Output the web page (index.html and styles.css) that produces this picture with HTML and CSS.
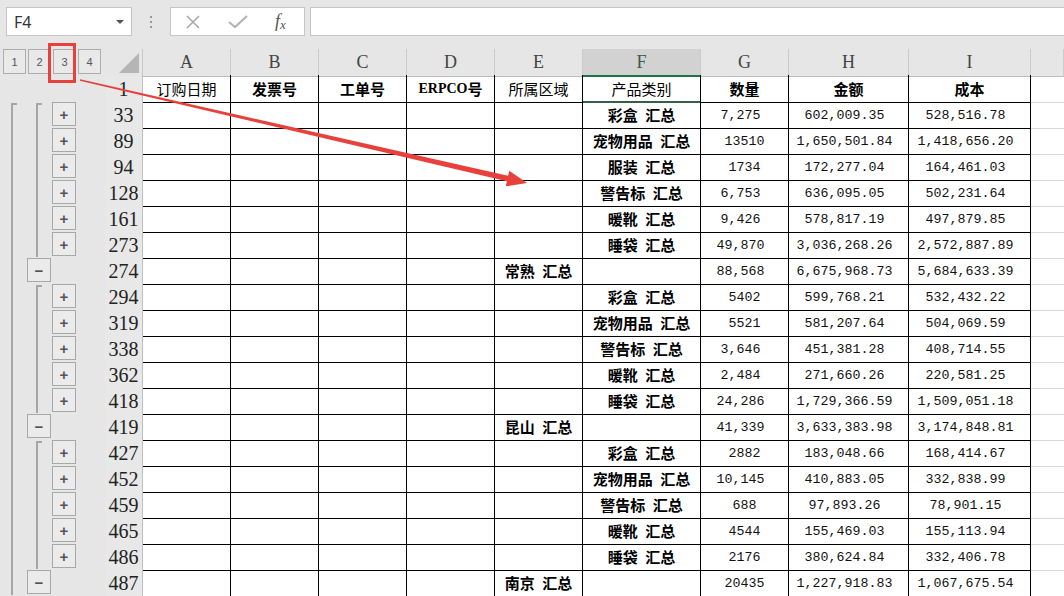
FILE: index.html
```html
<!doctype html>
<html>
<head>
  <meta charset="utf-8">
  <link rel="stylesheet" href="styles.css">
</head>
<body>

  <div class="toolbar">
    <div class="namebox">F4<span class="caret"></span></div>
    <div class="grip"><i></i><i></i><i></i></div>
    <div class="fxbox">
      <svg class="cancel" width="16" height="16" viewBox="0 0 16 16"><path d="M2 2 L14 14 M14 2 L2 14" stroke="#a9a9a9" stroke-width="1.6" fill="none"/></svg>
      <svg class="enter" width="20" height="14" viewBox="0 0 20 14"><path d="M1 7 L7 12 L19 1" stroke="#b4b4b4" stroke-width="2.2" fill="none"/></svg>
      <span class="fx">f<sub>x</sub></span>
    </div>
    <div class="formula"></div>
  </div>

  <div id="sheet" class="sheet"></div>

  <div class="mark"></div>
  <svg class="arrow" width="1064" height="596">
    <polygon points="80.2,79.2 508.1,175.8 509.3,170.7 527,183 505.7,186.3 506.9,181.2 79.8,80.8" fill="#e8413c"/>
  </svg>

  <script>
    var heads = ['A', 'B', 'C', 'D', 'E', 'F', 'G', 'H', 'I', ''];

    var titles = [
      ['订购日期', ''], ['发票号', 'b'], ['工单号', 'b'], ['<span class="lat">ERPCO</span>号', 'b'],
      ['所属区域', ''], ['产品类别', ' sel1'], ['数量', 'b'], ['金额', 'b'], ['成本', 'b']
    ];

    var rows = [
      ['33', '', '彩盒 汇总', '7,275', '602,009.35', '528,516.78'],
      ['89', '', '宠物用品 汇总', '13510', '1,650,501.84', '1,418,656.20'],
      ['94', '', '服装 汇总', '1734', '172,277.04', '164,461.03'],
      ['128', '', '警告标 汇总', '6,753', '636,095.05', '502,231.64'],
      ['161', '', '暖靴 汇总', '9,426', '578,817.19', '497,879.85'],
      ['273', '', '睡袋 汇总', '49,870', '3,036,268.26', '2,572,887.89'],
      ['274', '常熟 汇总', '', '88,568', '6,675,968.73', '5,684,633.39'],
      ['294', '', '彩盒 汇总', '5402', '599,768.21', '532,432.22'],
      ['319', '', '宠物用品 汇总', '5521', '581,207.64', '504,069.59'],
      ['338', '', '警告标 汇总', '3,646', '451,381.28', '408,714.55'],
      ['362', '', '暖靴 汇总', '2,484', '271,660.26', '220,581.25'],
      ['418', '', '睡袋 汇总', '24,286', '1,729,366.59', '1,509,051.18'],
      ['419', '昆山 汇总', '', '41,339', '3,633,383.98', '3,174,848.81'],
      ['427', '', '彩盒 汇总', '2882', '183,048.66', '168,414.67'],
      ['452', '', '宠物用品 汇总', '10,145', '410,883.05', '332,838.99'],
      ['459', '', '警告标 汇总', '688', '97,893.26', '78,901.15'],
      ['465', '', '暖靴 汇总', '4544', '155,469.03', '155,113.94'],
      ['486', '', '睡袋 汇总', '2176', '380,624.84', '332,406.78'],
      ['487', '南京 汇总', '', '20435', '1,227,918.83', '1,067,675.54']
    ];

    var num = function(v){
      var cls = v.indexOf(',') >= 0 ? 'c n pad' : 'c n';
      return "<div class='" + cls + "'>" + v + "</div>";
    }

    // column letters
    var markup = "<div class='row head'><div class='levels'>";
    for(var i = 1; i <= 4; i++){
      markup += "<span>" + i + "</span>";
    }
    markup += "</div><div class='corner'><i></i></div>";
    for(var i = 0; i < heads.length; i++){
      markup += "<div class='ch" + (heads[i] == 'F' ? " sel" : "") + "'>" + heads[i] + "</div>";
    }
    markup += "</div>";

    // row 1 titles
    markup += "<div class='row'><div class='gut'></div><div class='rh'>1</div>";
    for(var i = 0; i < titles.length; i++){
      markup += "<div class='c h " + titles[i][1] + "'>" + titles[i][0] + "</div>";
    }
    markup += "<div class='c j'></div></div>";

    // data rows
    var prevTotal = true;
    for(var i = 0; i < rows.length; i++){
      var r = rows[i];
      var isTotal = r[1] != '';
      var gut = "<div class='gut'><span class='s1'><i class='ln" + (i == 0 ? " top" : "") + "'></i></span><span class='s2'>";
      if(isTotal){
        gut += "<b class='btn'>&minus;</b></span>";
      }
      else{
        gut += "<i class='ln" + (prevTotal ? " top" : "") + "'></i></span><span class='s3'><b class='btn'>+</b></span>";
      }
      gut += "</div>";
      prevTotal = isTotal;

      markup += "<div class='row'>" + gut + "<div class='rh'>" + r[0] + "</div>";
      markup += "<div class='c'></div><div class='c'></div><div class='c'></div><div class='c'></div>";
      markup += "<div class='c t'>" + r[1] + "</div>";
      markup += "<div class='c t'>" + r[2] + "</div>";
      markup += num(r[3]) + num(r[4]) + num(r[5]);
      markup += "<div class='c j'></div></div>";
    }
    document.getElementById("sheet").innerHTML = markup;
  </script>

</body>
</html>
```

FILE: styles.css
```css
*{
  box-sizing: border-box;
}
body{
  margin: 0;
  width: 1064px;
  height: 596px;
  overflow: hidden;
  position: relative;
  background: #ffffff;
  font-family: "Noto Sans CJK SC", sans-serif;
}

/* formula bar */
.toolbar{
  height: 49px;
  background: #e6e6e6;
  display: flex;
  align-items: flex-start;
  padding: 7px 0 0 6px;
}
.namebox{
  width: 126px;
  height: 29px;
  background: #fff;
  border: 1px solid #c6c6c6;
  display: flex;
  align-items: center;
  padding-left: 7px;
  font: 16px "Noto Sans", sans-serif;
  color: #333;
}
.caret{
  margin-left: auto;
  margin-right: 7px;
  width: 0;
  height: 0;
  border-left: 4px solid transparent;
  border-right: 4px solid transparent;
  border-top: 4px solid #555;
}
.grip{
  width: 38px;
  height: 29px;
  display: flex;
  flex-direction: column;
  align-items: center;
  justify-content: center;
  gap: 3px;
}
.grip i{
  width: 2px;
  height: 2px;
  background: #999;
}
.fxbox{
  width: 135px;
  height: 29px;
  background: #fff;
  border: 1px solid #c6c6c6;
  display: flex;
  align-items: center;
}
.cancel{
  margin-left: 14px;
}
.enter{
  margin-left: 27px;
}
.fx{
  margin-left: 27px;
  font: italic 18px "Liberation Serif", serif;
  color: #555;
}
.fx sub{
  font-size: 13px;
  vertical-align: -2px;
}
.formula{
  flex: 1;
  margin-left: 5px;
  height: 29px;
  background: #fff;
  border: 1px solid #c6c6c6;
  border-right: none;
}

/* grid */
.row{
  display: grid;
  grid-template-columns: 105px 38px 88px 88px 88px 88px 88px 118px 88px 120px 122px 33px;
  height: 26px;
}
.head .levels{
  background: #e6e6e6;
  display: flex;
  padding-left: 3px;
}
.levels span{
  width: 23px;
  height: 25px;
  margin-right: 2px;
  border: 1px solid #adadad;
  background: #e9e9e9;
  font: 11px "Liberation Sans", sans-serif;
  color: #555;
  display: flex;
  align-items: center;
  justify-content: center;
}
.corner{
  background: #e6e6e6;
  border-right: 1px solid #c8c8c8;
  border-bottom: 1px solid #bdbdbd;
  display: flex;
  justify-content: flex-end;
  align-items: flex-end;
  padding: 0 3px 3px 0;
}
.corner i{
  width: 0;
  height: 0;
  border-left: 20px solid transparent;
  border-bottom: 20px solid #b5b5b5;
}
.ch{
  background: #e6e6e6;
  border-right: 1px solid #cbcbcb;
  border-bottom: 1px solid #bdbdbd;
  text-align: center;
  font: 18px "Liberation Serif", serif;
  line-height: 26px;
  color: #444;
}
.ch.sel{
  background: #d2d2d2;
  border-bottom: 2px solid #217346;
  color: #3d5a4a;
}

/* outline gutter */
.gut{
  background: #e6e6e6;
  display: flex;
}
.s1, .s2{
  width: 26px;
  height: 26px;
}
.ln{
  display: block;
  width: 6px;
  height: 26px;
  border-left: 2px solid #a6a6a6;
}
.s1 .ln{
  margin-left: 11px;
}
.s2 .ln{
  margin-left: 10px;
}
.ln.top{
  margin-top: 2px;
  height: 24px;
  border-top: 2px solid #a6a6a6;
}
.btn{
  display: flex;
  align-items: center;
  justify-content: center;
  width: 24px;
  height: 24px;
  margin-top: 1px;
  border: 1px solid #a8a8a8;
  background: #ebebeb;
  font: bold 15px "Liberation Sans", sans-serif;
  color: #555;
}
.s2 .btn{
  margin-left: 1px;
}

/* row headers and cells */
.rh{
  background: #e8e8e8;
  border-right: 1px solid #c0c0c0;
  border-bottom: 1px solid #d6d6d6;
  text-align: center;
  font: 20px "Liberation Serif", serif;
  line-height: 26px;
  padding-top: 1px;
  color: #222;
}
.c{
  border-right: 1px solid #000;
  border-bottom: 1px solid #000;
  display: flex;
  align-items: center;
  justify-content: center;
  white-space: pre;
  color: #000;
}
.h{
  font: 15px "Noto Sans CJK SC", sans-serif;
}
.h.b{
  font-weight: bold;
}
.lat{
  font: bold 14px "Liberation Serif", serif;
}
.sel1{
  border-bottom: 2px solid #3a5d4a;
}
.t{
  font: bold 15px "Noto Sans CJK SC", sans-serif;
  word-spacing: 4px;
}
.n{
  font: 13.3px "Liberation Mono", monospace;
  color: #111;
  padding-top: 2px;
}
.n.pad{
  padding-right: 8px;
}
.j{
  border-right: none;
  border-bottom: 1px solid #d9d9d9;
}

/* annotations */
.mark{
  position: absolute;
  left: 48px;
  top: 43px;
  width: 28px;
  height: 40px;
  border: 3px solid #e8413c;
}
.arrow{
  position: absolute;
  left: 0;
  top: 0;
  pointer-events: none;
}
```
